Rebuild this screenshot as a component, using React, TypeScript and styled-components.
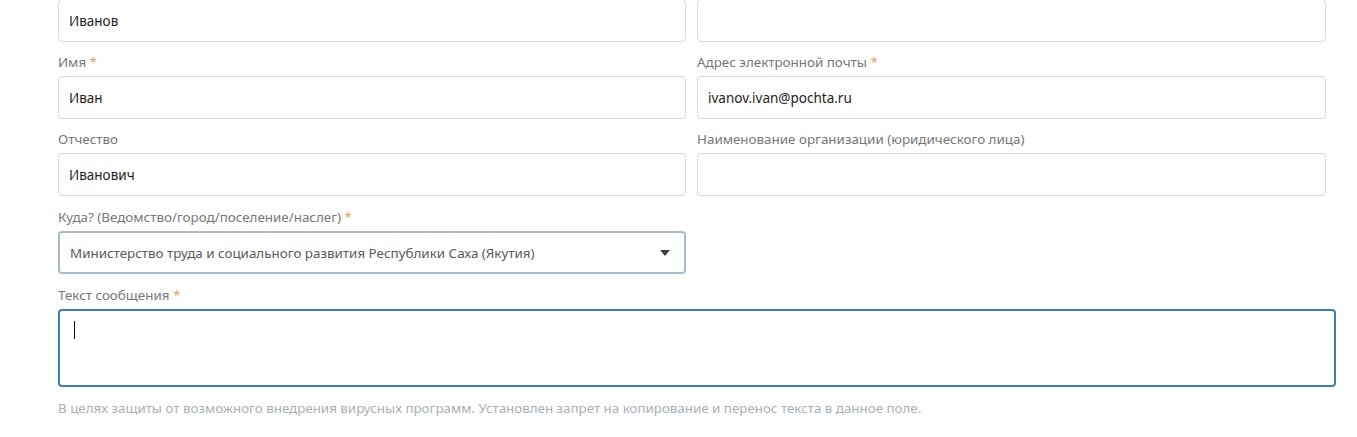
import React from 'react';
import styled, { createGlobalStyle } from 'styled-components';

const GlobalStyle = createGlobalStyle`
  html, body {
    margin: 0;
    padding: 0;
    background: #ffffff;
    font-family: "Noto Sans", "Open Sans", sans-serif;
    overflow: hidden;
  }
`;

const Form = styled.div`
  margin-top: -25px;
  padding: 0 21px 0 58px;
`;

const Grid = styled.div`
  display: grid;
  grid-template-columns: 628px 629px;
  column-gap: 11px;
`;

const Field = styled.div<{ $gap?: number }>`
  display: flex;
  flex-direction: column;
  margin-bottom: ${(p) => p.$gap ?? 10}px;
`;

const Label = styled.label`
  font-size: 13.4px;
  line-height: 20px;
  color: #777777;
  margin-bottom: 4px;
  white-space: nowrap;
`;

const Star = styled.span`
  color: #e2a06a;
`;

const Input = styled.div<{ $tone?: 'plain' | 'select' | 'active' }>`
  box-sizing: border-box;
  height: ${(p) => (p.$tone === 'active' ? '78px' : '43px')};
  border: ${(p) =>
    p.$tone === 'active'
      ? '2px solid #3d80b6'
      : p.$tone === 'select'
      ? '2px solid #a9bccb'
      : '1px solid #d9d9d9'};
  border-radius: 4px;
  padding: ${(p) => (p.$tone === 'active' ? '8px 14px' : '0 10px')};
  display: flex;
  align-items: ${(p) => (p.$tone === 'active' ? 'flex-start' : 'center')};
  font-size: 13.5px;
  color: #222222;
  background: #fff;
`;

const Wide = styled.div`
  width: 1278px;
`;

const SelectText = styled.span`
  flex: 1;
  font-size: 13.4px;
  color: #5a5a5a;
`;

const Caret = styled.span`
  width: 0;
  height: 0;
  border-left: 5px solid transparent;
  border-right: 5px solid transparent;
  border-top: 6px solid #3a3f44;
  margin-right: 4px;
`;

const Cursor = styled.span`
  width: 1px;
  height: 18px;
  background: #111;
  margin-top: 2px;
`;

const Hint = styled.div`
  font-size: 13.35px;
  color: #a8b0b6;
  margin-top: 12px;
  white-space: nowrap;
`;

const Req = () => <Star> *</Star>;

export default function App() {
  return (
    <>
      <GlobalStyle />
      <Form>
        <Grid>
          <Field>
            <Label>Фамилия<Req /></Label>
            <Input>Иванов</Input>
          </Field>
          <Field>
            <Label>Номер телефона</Label>
            <Input />
          </Field>
          <Field>
            <Label>Имя<Req /></Label>
            <Input>Иван</Input>
          </Field>
          <Field>
            <Label>Адрес электронной почты<Req /></Label>
            <Input>ivanov.ivan@pochta.ru</Input>
          </Field>
          <Field $gap={11}>
            <Label>Отчество</Label>
            <Input>Иванович</Input>
          </Field>
          <Field $gap={11}>
            <Label>Наименование организации (юридического лица)</Label>
            <Input />
          </Field>
          <Field $gap={11}>
            <Label>Куда? (Ведомство/город/поселение/наслег)<Req /></Label>
            <Input $tone="select">
              <SelectText>Министерство труда и социального развития Республики Саха (Якутия)</SelectText>
              <Caret />
            </Input>
          </Field>
        </Grid>
        <Wide>
          <Field $gap={0}>
            <Label>Текст сообщения<Req /></Label>
            <Input $tone="active">
              <Cursor />
            </Input>
          </Field>
          <Hint>
            В целях защиты от возможного внедрения вирусных программ. Установлен запрет на копирование и перенос текста в данное поле.
          </Hint>
        </Wide>
      </Form>
    </>
  );
}
